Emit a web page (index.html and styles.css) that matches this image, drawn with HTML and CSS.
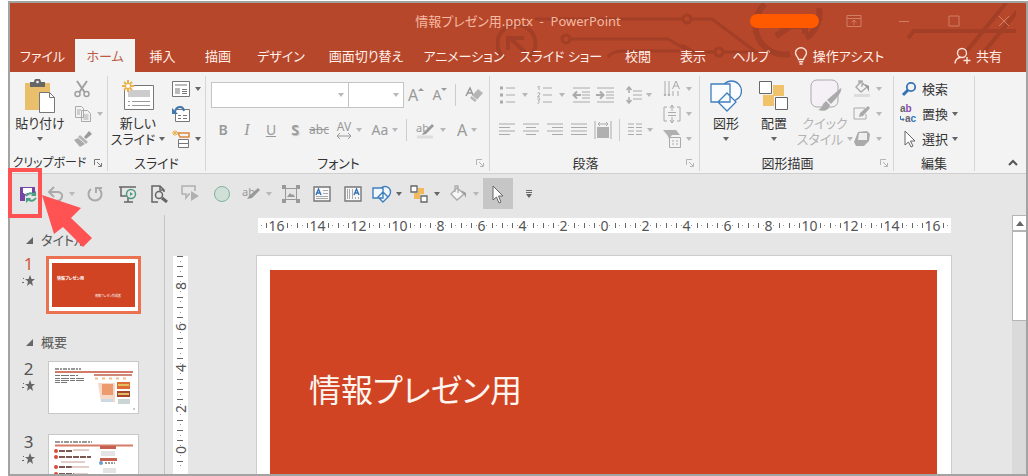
FILE: index.html
```html
<!DOCTYPE html>
<html lang="ja">
<head>
<meta charset="utf-8">
<title>情報プレゼン用.pptx - PowerPoint</title>
<link rel="stylesheet" href="styles.css">
</head>
<body>
<div class="window">
  <header class="top">
    <svg class="circuit" width="520" height="70" viewBox="496 3 520 70" fill="none" stroke="#a23f26" stroke-width="3" aria-hidden="true">
      <path d="M504 58A19 19 0 1 1 530 57" stroke-width="4"/><path d="M527 54 510 38M508 50V38H524" stroke-width="4"/>
      <path d="M535 19H682M571 39H668L692 53M608 57Q613 51 622 51H680"/><circle cx="687" cy="19" r="4"/><circle cx="566" cy="39" r="4"/>
      <path d="M692 19H712L756 52H724M714 52H694L682 45"/><circle cx="719" cy="52" r="4"/>
      <path d="M765 4A29 29 0 0 0 790 54M819 8A29 29 0 0 1 806 38" stroke-width="6"/><path d="M776 36 792 25M779 26H805V34" stroke-width="6"/>
      <path d="M908 38 914 31H1024M966 52 1006 3M984 52 1024 3" stroke-width="4"/>
    </svg>
    <div class="titlebar">
      <h1 class="doc-title">情報プレゼン用.pptx&nbsp; -&nbsp; PowerPoint</h1>
      <div class="win-controls">
        <span class="account"></span>
        <button class="win-btn" aria-label="リボンの表示オプション"><svg width="16" height="12" viewBox="0 0 16 12"><path d="M1 .5h14v11H1zM1 3.500h14M8 10V5M5.500 7.500 8 5l2.500 2.500"/></svg></button>
        <button class="win-btn" aria-label="最小化"><svg width="12" height="12" viewBox="0 0 12 12"><path d="M1 6.500h10"/></svg></button>
        <button class="win-btn" aria-label="最大化"><svg width="12" height="12" viewBox="0 0 12 12"><path d="M1 1h10v10H1z"/></svg></button>
        <button class="win-btn" aria-label="閉じる"><svg width="12" height="12" viewBox="0 0 12 12"><path d="m1 1 10 10M11 1 1 11"/></svg></button>
      </div>
    </div>
    <nav class="tabs">
      <button class="tab">ファイル</button><button class="tab active">ホーム</button><button class="tab">挿入</button><button class="tab">描画</button><button class="tab">デザイン</button><button class="tab">画面切り替え</button><button class="tab">アニメーション</button><button class="tab">スライド ショー</button><button class="tab">校閲</button><button class="tab">表示</button><button class="tab">ヘルプ</button>
      <button class="tab"><svg width="14" height="18" viewBox="0 0 14 18" fill="none" stroke="#fbe3da" stroke-width="1.400"><path d="M4.500 12.500C4.500 10 1.500 9 1.500 5.800a5.500 5 0 0 1 11 0C12.500 9 9.500 10 9.500 12.500zM4.800 14.800h4.400M5.500 17h3"/></svg>操作アシスト</button>
      <button class="tab share"><svg width="17" height="18" viewBox="0 0 17 18" fill="none" stroke="#fbe3da" stroke-width="1.400"><circle cx="8" cy="6" r="4.500"/><path d="M1 16.500Q1.500 11 6.500 10.500M13 10v7M9.500 13.500h7"/></svg>共有</button>
    </nav>
  </header>

  <section class="ribbon">
    <div class="group">
      <div class="body">
        <button class="big"><svg width="32" height="34" viewBox="0 0 32 34"><path fill="#e9bf6b" d="M1 4h25v27H1z"/><path fill="#666" d="M6 3h4a3.500 3.500 0 0 1 7 0h4v5H6z"/><circle cx="13.500" cy="3" r="1.300" fill="#f3f3f3"/><path fill="#fff" stroke="#777" d="M15.500 13.500h10l5 5v15h-15z"/><path fill="none" stroke="#777" d="M25.500 13.500v5h5"/></svg><span>貼り付け</span><i class="caret"></i></button>
        <div class="stack">
          <button class="ic dis" aria-label="切り取り"><svg width="16" height="18" viewBox="0 0 16 18" fill="none" stroke="#a0a0a0" stroke-width="1.500"><path d="m3 1 7.500 11M13 1 5.500 12" stroke-width="2"/><circle cx="3.500" cy="14" r="2.500"/><circle cx="12.500" cy="14" r="2.500"/></svg></button>
          <button class="ic dis" aria-label="コピー"><svg width="18" height="16" viewBox="0 0 18 16" fill="#f3f3f3" stroke="#aaa"><path d="M1.500.5h6l2 2v9h-8zM7.500 4.500h6l3 3v8h-9z"/><path d="M3 4h4M3 6h3M3 8h3M9.500 9h5M9.500 11h5M9.500 13h5"/></svg><i class="caret"></i></button>
          <button class="ic dis" aria-label="書式のコピー"><svg width="18" height="16" viewBox="0 0 18 16"><path d="m10 6 5-6 3 3-6 5z" fill="#999"/><path d="m6 4 8 7-2 2-8-7z" fill="#b5b5b5"/><path d="m4 7 7 6-5 3-6-7z" fill="#aaa"/></svg></button>
        </div>
      </div>
      <footer><span class="compact">クリップボード</span><button class="launch dark" aria-label="クリップボードの詳細"><svg width="8" height="8" viewBox="0 0 8 8"><path d="M.5 6V.5H6M3 3l4 4M7.500 4v3.500H4"/></svg></button></footer>
    </div>

    <div class="group">
      <div class="body">
        <button class="big"><svg width="34" height="32" viewBox="0 0 34 32"><path fill="#fff" stroke="#777" d="M3.500 5.500h29v24h-29z"/><path fill="#ccc" d="M7 10h22v7H7z"/><path stroke="#999" d="M7 21.500h2m2 0h18M7 25.500h2m2 0h18"/><circle cx="7" cy="6" r="5" fill="#f3f3f3"/><path stroke="#e9b14c" stroke-width="2" d="M7 0v12M1 6h12M3 2l8 8M11 2l-8 8"/><circle cx="7" cy="6" r="2" fill="#fff"/></svg><span>新しい</span><span class="line">スライド<i class="caret"></i></span></button>
        <div class="stack">
          <button class="ic" aria-label="レイアウト"><svg width="18" height="16" viewBox="0 0 18 16" fill="#fff" stroke="#777"><path d="M.5.5h17v15H.5z"/><path fill="#bbb" stroke="none" d="M3 3h12v2H3zM3 7h5v6H3z"/><path d="M10 8.500h5M10 10.500h5M10 12.500h5"/></svg><i class="caret"></i></button>
          <button class="ic" aria-label="リセット"><svg width="18" height="18" viewBox="0 0 18 18" fill="#fff" stroke="#777"><path d="M3.500 4.500h14v12h-14z"/><path d="M6 10.500h3M11 10.500h4M6 13.500h3M11 13.500h4"/><path d="M3 7c1-6 8-7 9-1" fill="none" stroke="#3f78ad" stroke-width="2"/><path fill="#3f78ad" stroke="none" d="M0 3v6h6z"/></svg></button>
          <button class="ic" aria-label="セクション"><svg width="18" height="18" viewBox="0 0 18 18" fill="#fff" stroke="#777"><path d="M6.500 9.500h10v8h-10zM6 13.500h10"/><path d="M6 3h11v4H8z" stroke="#dd873d" fill="none" stroke-width="1.500"/><path d="M0 3h6M3 0v6M1 1l4 4M5 1 1 5" stroke="#e9b14c"/></svg><i class="caret"></i></button>
        </div>
      </div>
      <footer><span class="full">スライド</span></footer>
    </div>

    <div class="group font">
      <div class="rows">
        <div class="row">
          <span class="combo"><input class="family" aria-label="フォント"><i class="caret"></i></span><span class="combo"><input class="size" aria-label="フォント サイズ"><i class="caret"></i></span>
          <button class="cell"><b class="grow">A</b><svg width="6" height="14" viewBox="0 0 6 14"><path d="M0 3 3 0l3 3z" fill="#999"/></svg></button>
          <button class="cell"><b class="shrink">A</b><svg width="6" height="14" viewBox="0 0 6 14"><path d="m0 0 3 3 3-3z" fill="#999"/></svg></button>
          <i class="sep"></i>
          <button class="cell" aria-label="書式のクリア"><svg width="18" height="18" viewBox="0 0 18 18"><path d="m1 10 4-8 3 7M3 7h4" fill="none" stroke="#999" stroke-width="1.500"/><path d="m13 3 5 4-8 9-5-4z" fill="#b5b5b5"/><path d="m7 10 5 4" stroke="#eee"/></svg></button>
        </div>
        <div class="row">
          <button class="cell"><b>B</b></button><button class="cell"><i class="serif">I</i></button><button class="cell"><u>U</u></button><button class="cell"><b class="shadow">S</b></button><button class="cell"><s>abc</s></button>
          <button class="cell wide"><span class="av">AV<svg width="16" height="6" viewBox="0 0 16 6" fill="none" stroke="#999"><path d="M1 3h14M4 0 1 3l3 3M12 0l3 3-3 3"/></svg></span><i class="caret"></i></button>
          <button class="cell wide">Aa<i class="caret"></i></button>
          <i class="sep"></i>
          <button class="cell wide"><span class="pen"><span>ab</span><svg width="20" height="18" viewBox="0 0 20 18"><path d="m7 12 9-9 2 2-8 8-4 1z" fill="#999"/><path d="M1 16h16" stroke="#ddd" stroke-width="3"/></svg></span><i class="caret"></i></button>
          <button class="cell wide"><b class="fontcolor">A</b><i class="caret"></i></button>
        </div>
      </div>
      <footer><span>フォント</span><button class="launch" aria-label="フォントの詳細"><svg width="8" height="8" viewBox="0 0 8 8"><path d="M.5 6V.5H6M3 3l4 4M7.500 4v3.500H4"/></svg></button></footer>
    </div>

    <div class="group para">
      <div class="rows">
        <div class="row">
          <button class="cell list" aria-label="箇条書き"><svg width="16" height="18" viewBox="0 0 16 18"><path d="M0 2h3M0 9h3M0 16h3" stroke-width="3"/><path d="M6 2h9M6 9h9M6 16h9"/></svg><i class="caret"></i></button>
          <button class="cell list" aria-label="段落番号"><svg width="16" height="18" viewBox="0 0 16 18"><path d="M2 0v4M.5 1 2 0M.5 7Q3 6 3 8L.5 11H3M.5 13H3L1.500 15Q3.500 16 .5 18"/><path d="M6 2h9M6 9h9M6 16h9"/></svg><i class="caret"></i></button>
          <button class="cell" aria-label="インデントを減らす"><svg width="18" height="16" viewBox="0 0 18 16"><path d="M1 1h17M10 5h8M10 8h8M10 11h8M1 15h17"/><path d="M9 8H2M5 4.500 1.500 8 5 11.500" stroke-width="2"/></svg></button>
          <button class="cell" aria-label="インデントを増やす"><svg width="18" height="16" viewBox="0 0 18 16"><path d="M1 1h17M10 5h8M10 8h8M10 11h8M1 15h17"/><path d="M0 8h7M4 4.500 7.500 8 4 11.500" stroke-width="2"/></svg></button>
          <button class="cell wide spacing" aria-label="行間"><svg width="16" height="18" viewBox="0 0 16 18"><path d="M7 5h9M7 9h9M7 13h9"/><path d="M3 1v6M3 11v6M.5 4 3 1l2.500 3M.5 14 3 17l2.500-3" stroke-width="1.500"/></svg><i class="caret"></i></button>
        </div>
        <div class="row">
          <button class="cell" aria-label="左揃え"><svg width="16" height="13" viewBox="0 0 16 13"><path d="M0 1h16M0 4.500h11M0 8h16M0 11.500h11"/></svg></button>
          <button class="cell" aria-label="中央揃え"><svg width="16" height="13" viewBox="0 0 16 13"><path d="M0 1h16M3 4.500h10M0 8h16M3 11.500h10"/></svg></button>
          <button class="cell" aria-label="右揃え"><svg width="16" height="13" viewBox="0 0 16 13"><path d="M0 1h16M5 4.500h11M0 8h16M5 11.500h11"/></svg></button>
          <button class="cell" aria-label="両端揃え"><svg width="16" height="13" viewBox="0 0 16 13"><path d="M0 1h16M0 4.500h16M0 8h16M0 11.500h16"/></svg></button>
          <button class="cell" aria-label="均等割り付け"><svg width="18" height="18" viewBox="0 0 18 18"><path d="M1 0v18M17 0v18M4 3h10M6 1 4 3l2 2M12 1l2 2-2 2"/><path class="solid" d="M3 6h12v11H3z"/></svg></button>
          <i class="sep"></i>
          <button class="cell wide" aria-label="段組み"><svg width="16" height="13" viewBox="0 0 16 13"><path d="M1 1h6M9 1h6M1 4.500h6M9 4.500h6M1 8h6M9 8h6M1 11.500h6M9 11.500h6"/></svg><i class="caret"></i></button>
        </div>
      </div>
      <div class="stack">
        <button class="ic dis" aria-label="文字列の方向"><svg width="18" height="18" viewBox="0 0 18 18"><path d="M2 1v15M6 1v15M10 11v5M15 11v5M1 14l1 2 1-2M5 14l1 2 1-2M9.500 9 13 1l3.500 8M11 6h4"/></svg><i class="caret"></i></button>
        <button class="ic dis" aria-label="文字の配置"><svg width="18" height="18" viewBox="0 0 18 18"><path d="M4 2H1v14h3M14 2h3v14h-3M5 7.500h8M5 10.500h8M9 0v6M9 12v6M7 3l2-3 2 3M7 15l2 3 2-3"/></svg><i class="caret"></i></button>
        <button class="ic dis" aria-label="SmartArt に変換"><svg width="18" height="18" viewBox="0 0 18 18"><path class="solid" d="M0 0h13l4 5H9L6 9 5 6z"/><path d="M6.500 7.500h11v10h-11zM9 11h2M13 11h2M9 14h2M13 14h2"/></svg><i class="caret"></i></button>
      </div>
      <footer><span>段落</span><button class="launch" aria-label="段落の詳細"><svg width="8" height="8" viewBox="0 0 8 8"><path d="M.5 6V.5H6M3 3l4 4M7.500 4v3.500H4"/></svg></button></footer>
    </div>

    <div class="group draw">
      <div class="body">
        <button class="big"><svg width="32" height="32" viewBox="0 0 32 32" fill="#fafcff" stroke="#3f7fbd" stroke-width="1.300"><circle cx="21.500" cy="11" r="10"/><path d="M1 4h19v18H1zM17 13l9 9-9 9-9-9z"/></svg><span>図形</span><i class="caret"></i></button>
        <button class="big"><svg width="32" height="32" viewBox="0 0 32 32"><path fill="#f0c36b" d="M15 5h11v11H15zM5 15h11v11H5z"/><path fill="#fff" stroke="#666" d="M1.500 1.500h12v12h-12zM17.500 17.500h12v12h-12z"/></svg><span>配置</span><i class="caret"></i></button>
        <button class="big quick dis"><svg width="34" height="34" viewBox="0 0 34 34"><rect x="3" y="1" width="27" height="27" rx="6" fill="#f5f0f5" stroke="#aaa"/><path fill="#aaa" d="M33 9q2 4-10 16l-4-4zM18 22l4 4q-2 8-12 5 4-2 5-6z"/></svg><span>クイック</span><span class="line">スタイル<i class="caret"></i></span></button>
        <div class="stack">
          <button class="ic dis" aria-label="図形の塗りつぶし"><svg width="18" height="17" viewBox="0 0 18 17"><path d="m3 7 5-5 6 5-6 5zM6 5V1h3v6" fill="none" stroke="#aaa" stroke-width="1.400"/><path d="m12 4 4 2v6l-2-4z" fill="#999"/><path d="M1 15.500h16" stroke="#ddd" stroke-width="3"/></svg><i class="caret"></i></button>
          <button class="ic dis" aria-label="図形の枠線"><svg width="18" height="16" viewBox="0 0 18 16"><path d="M12 2H1v11h12V8" fill="none" stroke="#aaa"/><path d="m6 11 1-4 8-7 2 2-7 8z" fill="#aaa"/></svg><i class="caret"></i></button>
          <button class="ic dis" aria-label="図形の効果"><svg width="18" height="16" viewBox="0 0 18 16"><path d="m5 1 9-1 3 3-1 7-5 5H3l-2-4z" fill="#aaa"/><path d="M6 2h8v7H5z" fill="#eee"/></svg><i class="caret"></i></button>
        </div>
      </div>
      <footer><span>図形描画</span><button class="launch" aria-label="図形描画の詳細"><svg width="8" height="8" viewBox="0 0 8 8"><path d="M.5 6V.5H6M3 3l4 4M7.500 4v3.500H4"/></svg></button></footer>
    </div>

    <div class="group edit">
      <div class="stack">
        <button class="cmd"><svg width="16" height="16" viewBox="0 0 16 16" fill="none" stroke="#3473b7"><circle cx="10" cy="6" r="4.200" stroke-width="1.800"/><path d="m7 9-5 5" stroke-width="3"/></svg>検索</button>
        <button class="cmd"><span class="swap"><span>a<em>b</em></span><span class="to"><svg width="5" height="6" viewBox="0 0 5 6" fill="none" stroke="#3473b7"><path d="M.5 0v3.500H4M2.500 2l1.500 1.500L2.500 5"/></svg>a<strong>c</strong></span></span>置換<i class="caret"></i></button>
        <button class="cmd"><svg width="16" height="18" viewBox="0 0 16 18"><path d="M4 1v14l3.500-3 2.500 5 2-1-2.500-5H14z" fill="#fff" stroke="#666"/></svg>選択<i class="caret"></i></button>
      </div>
      <footer><span class="full">編集</span></footer>
    </div>
    <div class="ribbon-end"><button class="collapse" aria-label="リボンを折りたたむ"><svg width="10" height="8" viewBox="0 0 10 8" fill="none" stroke="#555" stroke-width="2"><path d="m1 6 4-4 4 4"/></svg></button></div>
  </section>

  <nav class="qat">
    <button aria-label="上書き保存"><svg width="18" height="18" viewBox="0 0 18 18"><path d="M1 2h4v7h7V2h4v6H8l-2 3v5H1z" fill="#7546a3"/><path d="M4 2h9v6H4z" fill="#fff"/><path d="M4 2.500h12" stroke="#7546a3"/><path d="M7 11q4-5 8-1M17 13q-4 5-8 1" fill="none" stroke="#4aa182" stroke-width="2"/><path d="M17 6v5h-5zM7 18v-5h5z" fill="#4aa182"/></svg></button>
    <button class="dis" aria-label="元に戻す"><svg width="18" height="18" viewBox="0 0 18 18" fill="none" stroke="#aaa" stroke-width="2"><path d="M2 7h9q5 1 4 5t-6 4M7 2 2 7l5 5"/></svg><i class="caret"></i></button>
    <button class="dis" aria-label="やり直し"><svg width="18" height="18" viewBox="0 0 18 18" fill="none" stroke="#aaa" stroke-width="2"><path d="M5 4a6.500 6.500 0 1 0 8 0M10 8V3h6"/></svg></button>
    <button aria-label="スライド ショー"><svg width="18" height="18" viewBox="0 0 18 18" fill="none" stroke="#666" stroke-width="1.500"><path d="M0 2h17M2 2v9h6M9 12v5M5 17h9"/><circle cx="12" cy="9" r="4.500" fill="#e6e6e6" stroke="#4c9a80"/><path d="m11 7 3 2-3 2z" fill="#4c9a80" stroke="none"/></svg></button>
    <button aria-label="印刷プレビュー"><svg width="18" height="18" viewBox="0 0 18 18" fill="none" stroke="#666" stroke-width="1.500"><path d="M8 17H2V1h8l4 4v2M10 1v4h4"/><circle cx="9" cy="10" r="3.500"/><path d="m12 13 5 4" stroke-width="3"/></svg></button>
    <button aria-label="コメント"><svg width="18" height="18" viewBox="0 0 18 18" fill="none" stroke="#b0b0b0" stroke-width="1.500"><path d="M9 9H8l-3 4V9H1V1h13v5"/><path d="m10 6 8 5-8 5z" fill="#b0b0b0" stroke="none"/></svg></button>
    <button aria-label="楕円"><svg width="18" height="18" viewBox="0 0 18 18"><circle cx="9" cy="9" r="7.500" fill="#cfe0d8" stroke="#7fb29d"/></svg></button>
    <button class="dis" aria-label="蛍光ペン"><span class="pen"><span>ab</span><svg width="20" height="18" viewBox="0 0 20 18"><path d="m7 11 9-8 2 2-8 8-5 1z" fill="#999"/></svg></span><i class="caret"></i></button>
    <button aria-label="オブジェクトの選択"><svg width="18" height="18" viewBox="0 0 18 18" fill="none" stroke="#999"><path d="M3.500 3.500h11v11h-11z"/><path fill="#999" stroke="none" d="M0 0h4v4H0zM14 0h4v4h-4zM0 14h4v4H0zM14 14h4v4h-4zM5 12l3-4 2 2 1-1 2 3z"/></svg></button>
    <button aria-label="横書きテキスト"><svg width="18" height="16" viewBox="0 0 18 16"><path d="M1 1h16v14H1z" fill="#f8f8f8" stroke="#777" stroke-width="1.400"/><path d="M10 4.500h5M10 7.500h5M3 10.500h12M3 12.500h12" stroke="#aaa"/><path d="m3 9 2.500-6L8 9M4 7h3" fill="none" stroke="#3473b7" stroke-width="1.400"/></svg></button>
    <button aria-label="縦書きテキスト"><svg width="18" height="16" viewBox="0 0 18 16"><path d="M1 1h16v14H1z" fill="#f8f8f8" stroke="#777" stroke-width="1.400"/><path d="M3.500 3v10M5.500 3v10M8.500 3v10M11.500 11v2M14.500 11v2" stroke="#aaa"/><path d="m10 9 2.500-6L15 9M11 7h3" fill="none" stroke="#3473b7" stroke-width="1.400"/></svg></button>
    <button aria-label="図形"><svg width="20" height="18" viewBox="0 0 20 18" fill="#f4f8fc" stroke="#3f7fbd" stroke-width="1.400"><circle cx="13" cy="7" r="5.500"/><path d="M1 3h10v10H1zM11 7l5 5-5 5-5-5z"/></svg><i class="caret"></i></button>
    <button aria-label="配置"><svg width="20" height="18" viewBox="0 0 20 18"><path fill="#f0b95b" d="M8 3h6v6H8zM4 8h6v6H4z"/><path fill="#fff" stroke="#666" stroke-width="1.300" d="M1 1h6v6H1zM11 11h6v6h-6z"/></svg><i class="caret"></i></button>
    <button class="dis" aria-label="塗りつぶし"><svg width="20" height="18" viewBox="0 0 20 18"><path d="m2 9 6-6 7 6-7 6zM6 7V1h3v7" fill="#f6f6f6" stroke="#aaa" stroke-width="1.300"/><path d="m12 5 5 3v5l-2-4z" fill="#999"/></svg><i class="caret"></i></button>
    <button class="picked" aria-label="選択"><svg width="14" height="20" viewBox="0 0 14 20"><path d="M2 2v14l3.500-3 2.500 6 2-1-2.500-6H12z" fill="#fff" stroke="#666"/></svg></button>
    <button aria-label="ユーザー設定"><svg width="8" height="8" viewBox="0 0 8 8"><path d="M1 .5h6M1 2.500h6" stroke="#666"/><path d="M1 4h6L4 8z" fill="#666"/></svg></button>
  </nav>

  <main class="work">
    <aside class="thumbs">
      <h2 class="section"><i class="fold"></i>タイトル</h2>
      <div class="thumb-row current"><div class="meta"><span>1</span><svg width="13" height="12" viewBox="0 0 13 12"><path fill="#666" d="m8 0 1.500 4H13l-3 2.500 1 4.500-3-2.500L5 11l1-4.500L3 4h3.500zM1 3h1v1H1zM0 7h2v1H0z"/></svg></div>
        <div class="thumb first"><div class="mini"><p>情報プレゼン用</p><small>情報プレゼン作成者</small></div></div></div>
      <h2 class="section second"><i class="fold"></i>概要</h2>
      <div class="thumb-row"><div class="meta"><span>2</span><svg width="13" height="12" viewBox="0 0 13 12"><path fill="#666" d="m8 0 1.500 4H13l-3 2.500 1 4.500-3-2.500L5 11l1-4.500L3 4h3.500zM1 3h1v1H1zM0 7h2v1H0z"/></svg></div>
        <div class="thumb"><svg width="89" height="51" viewBox="0 0 89 51"><path d="M6 7h26" stroke="#999" stroke-width="2" stroke-dasharray="4 1 2 1"/><path d="M6 10h78" stroke="#d57c69" stroke-width="2"/><path d="M6 13.500h23M6 16.500h29M6 18.500h29M6 20.500h12" stroke="#777" stroke-dasharray="5 1 8 1"/><path d="M45 12h38v2H45z" fill="#cf8775"/><path d="M46 16.500h34" stroke="#edbd94" stroke-width="2" stroke-dasharray="3 4"/><path d="M49 21h17v19H52z" fill="#f6d8c6"/><path d="M53 22h11v11H53z" fill="#ee9a6f"/><path d="M52 37h12v3H52z" fill="#ccd9e2"/><path d="M68 20h13v7H68z" fill="#df6c32"/><path d="M68 29h13v6H68z" fill="#a84530"/><path d="M69 23h11M69 32h11" stroke="#e0bf60" stroke-width="2"/><path d="M69 37h12v5H69z" fill="#cbd6d4"/><path d="M84 47h2" stroke="#999"/></svg></div></div>
      <div class="thumb-row"><div class="meta"><span>3</span><svg width="13" height="12" viewBox="0 0 13 12"><path fill="#666" d="m8 0 1.500 4H13l-3 2.500 1 4.500-3-2.500L5 11l1-4.500L3 4h3.500zM1 3h1v1H1zM0 7h2v1H0z"/></svg></div>
        <div class="thumb"><svg width="89" height="51" viewBox="0 0 89 51"><path d="M6 7h37" stroke="#999" stroke-width="2" stroke-dasharray="5 1 2 1"/><path d="M6 10.500h78" stroke="#d57c69" stroke-width="2"/><g fill="#d94a3d"><circle cx="7" cy="16" r="2"/><circle cx="7" cy="22" r="2"/><circle cx="7" cy="32" r="2"/><circle cx="7" cy="39" r="2"/></g><path d="M10 16h14M10 22h32M10 32h13M10 39h15" stroke="#7b5852" stroke-width="2" stroke-dasharray="6 1"/><path d="M24 15h16M12 27h24M22 32h18M24 39h15" stroke="#c59c94"/><path d="M51 11h16v3H51zM51 23h17v3H51z" fill="#c65f4e"/><path d="M52 16h14v5H52zM54 33h13v5H54z" fill="#e4e4e4"/><circle cx="52" cy="28" r="2" fill="#669fd0"/><path d="M56 28h10" stroke="#999" stroke-width="2" stroke-dasharray="2 1"/></svg></div></div>
    </aside>
    <section class="editor">
      <div class="vruler"><i class="stub"></i><span><b>8</b></span><span><b>6</b></span><span><b>4</b></span><span><b>2</b></span><span><b>0</b></span></div>
      <div class="canvas">
        <div class="hruler"><span><b>16</b></span><span><b>14</b></span><span><b>12</b></span><span><b>10</b></span><span><b>8</b></span><span><b>6</b></span><span><b>4</b></span><span><b>2</b></span><span><b>0</b></span><span><b>2</b></span><span><b>4</b></span><span><b>6</b></span><span><b>8</b></span><span><b>10</b></span><span><b>12</b></span><span><b>14</b></span><span><b>16</b></span></div>
        <article class="slide"><div class="slide-fill"><h2>情報プレゼン用</h2></div></article>
      </div>
      <div class="scroll"><button class="up" aria-label="上へ"><svg width="8" height="5" viewBox="0 0 8 5"><path d="m0 5 4-5 4 5z" fill="#666"/></svg></button><div class="knob"></div></div>
    </section>
  </main>
</div>
<div class="callout"></div>
<svg class="pointer" width="52" height="54" viewBox="0 0 52 54" aria-hidden="true"><path d="m0 1 39 13-10 10 21 20-9 9-20-20-9 7z" fill="#ff5252"/></svg>
</body>
</html>
```
FILE: styles.css
```css
* { box-sizing: border-box; }
body {
  margin: 0;
  padding: 1px 0 0 8px;
  height: 100vh;
  overflow: hidden;
  position: relative;
  background: #fff;
  color: #444;
  font: 13px/16px "Noto Sans", "Noto Sans CJK JP", sans-serif;
  font-feature-settings: "palt";
}
button { border: 0; padding: 0; margin: 0; background: none; color: inherit; font: inherit; font-feature-settings: inherit; white-space: nowrap; }
svg { display: block; flex: none; }
h1, h2, p { margin: 0; font-weight: 400; }

.window { height: 100%; border: 2px solid #a3a3a3; background: #e6e6e6; display: flex; flex-direction: column; overflow: hidden; }

/* title bar and tabs */
.top { position: relative; background: #b7472a; flex: none; }
.circuit { position: absolute; left: 486px; top: 0; }
.titlebar { position: relative; display: grid; grid-template-columns: 1fr auto 1fr; align-items: center; height: 36px; }
.doc-title { grid-column: 2; font-size: 13px; color: #f5b9a2; }
.win-controls { display: flex; justify-content: flex-end; align-items: center; gap: 6px; }
.account { width: 69px; height: 14px; border-radius: 7px; background: #ff5a00; margin-right: 7px; }
.win-btn { width: 44px; height: 28px; display: grid; place-items: center; }
.win-btn path { fill: none; stroke: #d07e66; }
.tabs { position: relative; display: grid; grid-template-columns: 65px 60px 55px 56px 70px 100px 96px 98px 56px 54px 62px 114px 1fr; height: 33px; }
.tab { color: #fff0ea; display: flex; align-items: center; justify-content: center; gap: 5px; }
.tab.active { background: #f3f3f3; color: #bd5a40; }
.tab.share { justify-content: flex-end; padding-right: 24px; }

/* ribbon */
.ribbon { flex: none; display: grid; grid-template-columns: 98px 98px 284px 210px 194px 81px 1fr; height: 102px; padding-top: 4px; background: #f3f3f3; border-bottom: 1px solid #cfcfcf; }
.group { display: grid; grid-template-columns: 1fr; grid-template-rows: 79px 16px; border-right: 1px solid #d6d6d6; margin-bottom: 2px; }
.group footer { grid-column: 1 / -1; display: grid; grid-template-columns: 1fr 18px; align-items: center; text-align: center; color: #333; }
.group footer span { white-space: nowrap; }
.group footer .full { grid-column: 1 / -1; }
.group footer .compact { font-size: 12px; }
.launch { display: grid; place-items: center; }
.launch path { fill: none; stroke: #b5b5b5; }
.launch.dark path { stroke: #777; }
.body { display: flex; padding-left: 4px; }
.big { width: 52px; display: flex; flex-direction: column; align-items: center; padding-top: 3px; color: #333; }
.big svg { height: 34px; margin-bottom: 2px; }
.line { display: flex; align-items: center; gap: 4px; }
.big > .caret { margin-top: 6px; }
.caret { flex: none; width: 0; height: 0; border: 3px solid transparent; border-top: 4px solid #666; border-bottom: 0; }
.dis .caret, .rows .caret { border-top-color: #b8b8b8; }
.big.dis { color: #b3b3b3; }
.stack { display: grid; grid-template-rows: 25px 25px 25px; align-content: start; padding: 0 0 0 8px; }
.ic { display: flex; align-items: center; gap: 5px; }
.sep { width: 1px; height: 22px; background: #ccc; flex: none; }

.rows { padding: 5px 0 0 5px; display: flex; flex-direction: column; gap: 8px; color: #999; }
.row { display: flex; align-items: center; height: 27px; }
.cell { width: 24px; height: 24px; display: flex; align-items: center; justify-content: center; font-size: 14px; color: #999; }
.cell.wide { width: 36px; gap: 4px; }
.combo { position: relative; display: flex; }
.combo input { height: 26px; border: 1px solid #c4c4c4; background: #fff; padding: 0 16px 0 4px; font: inherit; }
.combo .family { width: 138px; }
.combo .size { width: 55px; border-left: 0; }
.combo .caret { position: absolute; right: 5px; top: 11px; }
.rows .sep { margin: 0 6px 0 3px; }
.font b { font-weight: 600; }
.font .row:first-child b { font-weight: 400; }
.font .grow, .font .fontcolor { font-size: 16px; }
.font .fontcolor { font-weight: 400; }
.serif { font-family: "Liberation Serif", serif; font-size: 16px; }
.shadow { text-shadow: 1px 1px 1px #bbb; }
.font s { font-size: 12px; }
.av { display: flex; flex-direction: column; align-items: center; line-height: 12px; font-size: 12px; }
/* letters with a pen drawn over them */
.pen { display: grid; width: 20px; font-size: 11px; line-height: 14px; color: #999; }
.pen > * { grid-area: 1 / 1; justify-self: start; }

.para { grid-template-columns: 170px 1fr; }
.para .rows .sep { margin: 0 2px 0 4px; }
.para svg { fill: none; stroke: #aaa; }
.para .solid { fill: #b0b0b0; stroke: none; }
.para .stack { padding: 0 0 0 3px; }
.cell.list { width: 37px; gap: 6px; }
.cell.spacing { margin-left: 4px; }

.draw .body { padding-left: 1px; }
.draw .big { width: 46px; }
.draw .big.quick { width: 56px; }
.draw .big:first-child { width: 50px; }
.draw .stack { padding: 0; }

.edit .stack { padding: 0 0 0 6px; }
.cmd { display: flex; align-items: center; gap: 4px; color: #333; }
.cmd svg { width: 18px; }
.swap { width: 18px; display: flex; flex-direction: column; font: 700 10px/10px "Liberation Sans", sans-serif; color: #666; text-align: left; }
.swap em { font-style: normal; color: #8b4bb0; }
.swap strong { color: #3473b7; }
.swap .to { display: flex; align-items: center; }
.swap svg { width: 5px; }
.ribbon-end { display: flex; align-items: flex-end; justify-content: flex-end; padding: 0 8px 6px 0; }

/* quick access toolbar */
.qat { flex: none; display: grid; grid-template-columns: 31px 36px 32px 33px 30px 32px 32px 38px 30px 32px 30px 38px 38px 39px 30px 32px; padding-left: 2px; height: 39px; align-items: center; }
.qat button { height: 31px; display: flex; align-items: center; justify-content: center; gap: 4px; }
.qat .picked { background: #c6c6c6; }

/* thumbnail pane */
.work { flex: 1; min-height: 0; display: flex; }
.thumbs { width: 155px; flex: none; border-right: 1px solid #c4c4c4; margin-top: 2px; padding-top: 16px; overflow: hidden; }
.section { display: flex; align-items: center; gap: 8px; padding-left: 16px; height: 18px; font-size: 13px; color: #555; }
.section.second { margin: 18px 0 10px; }
.fold { width: 0; height: 0; border-left: 7px solid transparent; border-bottom: 7px solid #666; }
.thumb-row { display: flex; height: 73px; padding-left: 12px; gap: 13px; }
.thumb-row.current { height: 66px; padding-top: 7px; gap: 11px; }
.meta { width: 13px; display: flex; flex-direction: column; align-items: center; gap: 3px; font-size: 17px; color: #555; }
.current .meta span { color: #d4573a; }
.thumb { width: 91px; height: 53px; background: #fff; border: 1px solid #c8c8c8; }
.thumb.first { width: 95px; height: 58px; border: 3px solid #ec7150; padding: 4px 3px; }
.mini { height: 100%; background: #d04424; color: #fff; padding: 13px 4px 0 5px; }
.mini p { font-size: 4px; line-height: 6px; font-weight: 700; }
.mini small { display: block; font-size: 3px; line-height: 5px; margin: 12px 0 0 38px; }

/* editing area */
.editor { flex: 1; min-width: 0; display: flex; align-items: stretch; padding-top: 2px; }
.hruler, .vruler { display: flex; background-color: #fff; overflow: hidden; color: #555; font-size: 14px; line-height: 15px; }
.hruler b, .vruler b { font-weight: 400; background: #fff; }
.hruler { justify-content: center; height: 15px; margin: 3px 1px 0 2px; }
.hruler span {
  flex: 0 0 41px; display: flex; justify-content: center; align-items: center;
  background:
    linear-gradient(#666, #666) 0 5px / 1px 5px no-repeat,
    linear-gradient(#666, #666) 10px 5px / 1px 5px no-repeat,
    linear-gradient(#666, #666) 31px 5px / 1px 5px no-repeat,
    repeating-linear-gradient(90deg, transparent 0 5px, #999 5px 6px, transparent 6px 10px) 0 7px / 41px 1px no-repeat;
}
.vruler { flex: none; flex-direction: column; width: 15px; margin: 41px 0 0 8px; }
.vruler span { flex: 0 0 41px; display: flex; justify-content: center; align-items: center; }
.vruler b { writing-mode: vertical-rl; rotate: 180deg; }
.vruler span, .stub {
  background:
    linear-gradient(#666, #666) 4px 0 / 6px 1px no-repeat,
    linear-gradient(#666, #666) 4px 10px / 6px 1px no-repeat,
    linear-gradient(#666, #666) 4px 31px / 6px 1px no-repeat,
    repeating-linear-gradient(transparent 0 5px, #999 5px 6px, transparent 6px 10px) 7px 0 / 1px 41px no-repeat;
}
.stub { flex: 0 0 10px; }
.canvas { flex: 1; min-width: 0; display: flex; flex-direction: column; margin: 0 60px 0 68px; }
.slide { flex: 1; margin-top: 22px; background: #fff; border: 1px solid #cdcdcd; border-bottom: 0; padding: 14px 14px 0 13px; }
.slide-fill { height: 100%; background: #d04424; padding: 96px 39px 0; }
.slide-fill h2 { color: #fff5ef; font-size: 32px; line-height: 48px; }
.scroll { width: 14px; flex: none; background: #dadada; display: flex; flex-direction: column; }
.up { height: 16px; background: #fff; border: 1px solid #b5b5b5; border-right: 0; display: grid; place-items: center; }
.knob { height: 90px; background: #fff; border: 1px solid #b5b5b5; border-right: 0; }

/* annotation */
.callout { position: absolute; left: 8px; top: 168px; width: 34px; height: 50px; border: 4px solid #ff5252; }
.pointer { position: absolute; left: 42px; top: 194px; }
```
